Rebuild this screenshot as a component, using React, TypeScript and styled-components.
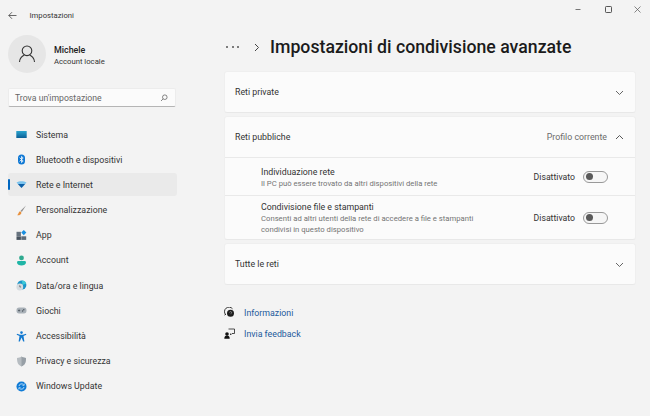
import React from "react";
import styled, { createGlobalStyle } from "styled-components";

const GlobalStyle = createGlobalStyle`
  html, body {
    margin: 0;
    padding: 0;
    background: #f3f3f3;
  }
  body {
    font-family: Roboto, "Noto Sans", sans-serif;
    color: #1f1f1f;
  }
`;

const Window = styled.div`
  width: 650px;
  height: 416px;
  overflow: hidden;
  display: grid;
  grid-template-columns: 224px 1fr;
  grid-template-rows: 30px 1fr;
  background: #f3f3f3;
`;

const TitleBar = styled.header`
  grid-column: 1 / span 2;
  display: flex;
  align-items: center;
  padding: 0 8px 0 8px;
`;

const AppName = styled.span`
  font-size: 7.7px;
  margin-left: 12.5px;
  color: #333;
`;

const Caption = styled.div`
  margin-left: auto;
  align-self: flex-start;
  display: flex;
  align-items: center;
  gap: 20.5px;
  padding-top: 5px;
`;

const Sidebar = styled.nav`
  display: flex;
  flex-direction: column;
  padding: 5px 0 0 8px;
`;

const Profile = styled.div`
  display: flex;
  align-items: center;
  gap: 8px;
  height: 38px;
`;

const Avatar = styled.div`
  width: 38px;
  height: 38px;
  border-radius: 50%;
  background: #e6e6e6;
  display: flex;
  align-items: center;
  justify-content: center;
`;

const ProfileText = styled.div`
  padding-top: 2px;
`;

const UserName = styled.div`
  font-size: 8.9px;
  font-weight: 500;
  line-height: 12px;
  color: #222;
`;

const UserKind = styled.div`
  font-size: 7.7px;
  line-height: 11px;
  color: #333;
`;

const Search = styled.div`
  width: 168px;
  height: 19px;
  margin-top: 15px;
  box-sizing: border-box;
  background: #fbfbfb;
  border: 1px solid #ececec;
  border-bottom: 1px solid #b5b5b5;
  border-radius: 2px;
  display: flex;
  align-items: center;
  justify-content: space-between;
  padding: 1px 7px 0 6px;
  font-size: 8.7px;
  color: #666;
`;

const NavList = styled.div`
  display: flex;
  flex-direction: column;
  gap: 2.2px;
  margin-top: 16px;
  width: 169px;
`;

const NavItem = styled.div<{ $active?: boolean }>`
  position: relative;
  height: 23px;
  display: flex;
  align-items: center;
  gap: 9px;
  padding-left: 8px;
  box-sizing: border-box;
  font-size: 8.8px;
  color: #333;
  border-radius: 3px;
  background: ${(p) => (p.$active ? "#eaeaea" : "transparent")};
  &::before {
    content: "";
    display: ${(p) => (p.$active ? "block" : "none")};
    position: absolute;
    left: 0;
    top: 6px;
    bottom: 6px;
    width: 2px;
    border-radius: 1px;
    background: #0067c0;
  }
`;

const NavIcon = styled.svg`
  width: 11px;
  height: 11px;
  flex: none;
`;

const Main = styled.main`
  display: flex;
  flex-direction: column;
  padding-right: 14px;
`;

const Heading = styled.div`
  display: flex;
  align-items: center;
  height: 34px;
`;

const Dots = styled.span`
  display: flex;
  gap: 3.5px;
  padding-left: 2px;
  margin-right: 14px;
  i {
    width: 2px;
    height: 2px;
    border-radius: 50%;
    background: #555;
  }
`;

const Title = styled.h1`
  margin: 0 0 0 9px;
  font-size: 17.7px;
  font-weight: 500;
  color: #1b1b1b;
  white-space: nowrap;
`;

const Cards = styled.div`
  display: flex;
  flex-direction: column;
  gap: 3px;
  margin-top: 7px;
`;

const Card = styled.section`
  background: #fbfbfb;
  border-radius: 3px;
  border: 1px solid #efefef;
  border-bottom-color: #e8e8e8;
  box-sizing: border-box;
  overflow: hidden;
`;

const CardHead = styled.div`
  height: 40px;
  display: flex;
  align-items: center;
  padding: 0 11px 0 10px;
  font-size: 8.8px;
  color: #333;
`;

const Hint = styled.span`
  margin-left: auto;
  margin-right: 8px;
  color: #6b6b6b;
`;

const Chevron = styled.svg<{ $pushed?: boolean }>`
  width: 9px;
  height: 9px;
  flex: none;
  margin-left: ${(p) => (p.$pushed ? "auto" : "0")};
`;

const Row = styled.div<{ $tall?: boolean }>`
  height: ${(p) => (p.$tall ? "43px" : "37px")};
  border-top: 1px solid #e9e9e9;
  display: flex;
  align-items: center;
  padding: 0 27px 0 36px;
`;

const RowText = styled.div`
  flex: 1;
  min-width: 0;
  padding-top: 1px;
`;

const RowTitle = styled.div`
  font-size: 8.8px;
  line-height: 12px;
  color: #333;
`;

const RowNote = styled.div`
  font-size: 7.7px;
  line-height: 11px;
  color: #747474;
  width: 240px;
`;

const ToggleLabel = styled.span`
  font-size: 8.7px;
  color: #333;
  margin-right: 8px;
`;

const Toggle = styled.span`
  width: 25px;
  height: 12px;
  box-sizing: border-box;
  border: 1px solid #999;
  border-radius: 6px;
  background: #f6f6f6;
  display: flex;
  align-items: center;
  padding-left: 2px;
  &::after {
    content: "";
    width: 7px;
    height: 7px;
    border-radius: 50%;
    background: #5a5a5a;
  }
`;

const Links = styled.div`
  display: flex;
  flex-direction: column;
  gap: 8px;
  margin-top: 21px;
`;

const LinkRow = styled.a`
  display: flex;
  align-items: center;
  gap: 9px;
  height: 13px;
  font-size: 8.8px;
  color: #1d5a9c;
`;

const LinkIcon = styled.svg`
  width: 11px;
  height: 11px;
  flex: none;
`;

const ChevronDown = ({ pushed }: { pushed?: boolean }) => (
  <Chevron viewBox="0 0 9 9" $pushed={pushed}>
    <path d="M1 3l3.5 3.5L8 3" fill="none" stroke="#555" strokeWidth="0.9" />
  </Chevron>
);

const ChevronUp = () => (
  <Chevron viewBox="0 0 9 9">
    <path d="M1 6l3.5-3.5L8 6" fill="none" stroke="#444" strokeWidth="0.9" />
  </Chevron>
);

const navIcons: Record<string, React.ReactNode> = {
  Sistema: (
    <>
      <defs>
        <linearGradient id="sys" x1="0" y1="0" x2="0" y2="1">
          <stop offset="0" stopColor="#2aa5cf" />
          <stop offset="1" stopColor="#0b5f96" />
        </linearGradient>
      </defs>
      <rect x="0.3" y="2" width="10.4" height="7" fill="url(#sys)" />
    </>
  ),
  Bluetooth: (
    <>
      <rect x="2" y="0.5" width="7" height="10" rx="3.5" fill="#0f78d4" />
      <path d="M3.6 3.6l3.6 3.4-1.7 1.6V2.4L7.2 4 3.6 7.4" fill="none" stroke="#fff" strokeWidth="0.8" />
    </>
  ),
  Rete: (
    <>
      <path d="M0.5 3.6C3.4 1.9 7.6 1.9 10.5 3.6L9.2 5H1.800z" fill="#7cc4ee" />
      <path d="M1.800 5h7.400L5.500 9z" fill="#0b5fa8" />
    </>
  ),
  Personalizzazione: (
    <>
      <path d="M10 0.6L4.6 5.800l1.200 1.200z" fill="#8f8f8f" />
      <path d="M4.200 6.200c-1.600 0.400-1.400 2.600-3 4 2.400 0.200 4.300-0.900 4.200-2.800z" fill="#e8903c" />
    </>
  ),
  App: (
    <>
      <rect x="0.5" y="1.8" width="4.4" height="4.200" fill="#66727e" />
      <rect x="0.5" y="6.300" width="4.4" height="3.600" fill="#46525e" />
      <rect x="5.300" y="6.300" width="4.900" height="3.600" fill="#5e6b78" />
      <rect x="6" y="0.8" width="3.600" height="3.600" transform="rotate(45 7.8 2.6)" fill="#1a8fe0" />
    </>
  ),
  Account: (
    <>
      <circle cx="5.5" cy="2.9" r="2.4" fill="#2fa98f" />
      <path d="M1 7.4c0-1 0.8-1.400 1.600-1.400h5.800c0.800 0 1.600 0.400 1.600 1.400 0 2-2.200 3-4.500 3s-4.500-1-4.500-3z" fill="#1fb5a6" />
    </>
  ),
  Data: (
    <>
      <circle cx="5.800" cy="5" r="4.600" fill="#1b95c9" />
      <path d="M5.800 0.400a4.600 4.600 0 0 1 4.400 3.200L6.600 5z" fill="#3dc9d6" />
      <circle cx="3.800" cy="7" r="3.400" fill="#d5dbe0" />
      <path d="M3.800 5.200V7h1.300" fill="none" stroke="#444" strokeWidth="0.6" />
    </>
  ),
  Giochi: (
    <>
      <rect x="0.5" y="2.600" width="10" height="5.800" rx="2.600" fill="#a9b1b8" />
      <path d="M2 5.500h2.200M3.100 4.400v2.200" stroke="#49525a" strokeWidth="0.7" />
      <circle cx="7.800" cy="4.800" r="0.7" fill="#49525a" />
      <circle cx="6.600" cy="6" r="0.7" fill="#49525a" />
    </>
  ),
  "Accessibilità": (
    <>
      <circle cx="5.5" cy="1.600" r="1.300" fill="#1279d0" />
      <path d="M1 2.800l3 1h3l3-1 0.300 1-2.800 1.200 0.900 5.400-1.200 0.200-1.700-4-1.700 4-1.200-0.200 0.900-5.400L0.700 3.800z" fill="#1279d0" />
    </>
  ),
  Privacy: (
    <>
      <path d="M5.500 0.600c1.400 1 3 1.400 4.500 1.500 0 4-0.800 7-4.500 8.500C1.800 9.100 1 6.100 1 2.100c1.500-0.100 3.100-0.500 4.500-1.500z" fill="#b6bcc1" />
      <path d="M5.500 0.600c1.400 1 3 1.400 4.500 1.500 0 4-0.800 7-4.500 8.500z" fill="#979fa6" />
    </>
  ),
  Windows: (
    <>
      <circle cx="5.500" cy="5.500" r="5" fill="#0f7bd6" />
      <path d="M3 5a2.600 2.600 0 0 1 4.600-1.200M8 6a2.600 2.600 0 0 1-4.600 1.200" fill="none" stroke="#d7ecfb" strokeWidth="0.8" />
      <path d="M8.200 2.500v1.800H6.400M2.800 8.500V6.700h1.800" fill="none" stroke="#d7ecfb" strokeWidth="0.7" />
    </>
  ),
};

const navItems = [
  { key: "Sistema", label: "Sistema" },
  { key: "Bluetooth", label: "Bluetooth e dispositivi" },
  { key: "Rete", label: "Rete e Internet", active: true },
  { key: "Personalizzazione", label: "Personalizzazione" },
  { key: "App", label: "App" },
  { key: "Account", label: "Account" },
  { key: "Data", label: "Data/ora e lingua" },
  { key: "Giochi", label: "Giochi" },
  { key: "Accessibilità", label: "Accessibilità" },
  { key: "Privacy", label: "Privacy e sicurezza" },
  { key: "Windows", label: "Windows Update" },
];

export default function App() {
  return (
    <Window>
      <GlobalStyle />
      <TitleBar>
        <svg width="9" height="9" viewBox="0 0 9 9">
          <path d="M8.500 4.500H.8M4 1.200L.8 4.500 4 7.800" fill="none" stroke="#444" strokeWidth="0.8" />
        </svg>
        <AppName>Impostazioni</AppName>
        <Caption>
          <svg width="9" height="9" viewBox="0 0 9 9">
            <path d="M1.500 4.500h5" stroke="#555" strokeWidth="0.8" />
          </svg>
          <svg width="9" height="9" viewBox="0 0 9 9">
            <rect x="1.500" y="1.500" width="6" height="6" rx="0.8" fill="none" stroke="#444" strokeWidth="0.9" />
          </svg>
          <svg width="9" height="9" viewBox="0 0 9 9">
            <path d="M1.500 1.500l6 6M7.500 1.500l-6 6" stroke="#555" strokeWidth="0.7" />
          </svg>
        </Caption>
      </TitleBar>

      <Sidebar>
        <Profile>
          <Avatar>
            <svg width="20" height="20" viewBox="0 0 20 20">
              <circle cx="10" cy="6.800" r="4.800" fill="none" stroke="#333" strokeWidth="1.100" />
              <path d="M2.500 18c0-3.800 3-6.400 4.800-6.800M17.500 18c0-3.800-3-6.400-4.800-6.800" fill="none" stroke="#333" strokeWidth="1.100" />
            </svg>
          </Avatar>
          <ProfileText>
            <UserName>Michele</UserName>
            <UserKind>Account locale</UserKind>
          </ProfileText>
        </Profile>
        <Search>
          <span>Trova un'impostazione</span>
          <svg width="8" height="8" viewBox="0 0 8 8">
            <circle cx="4.800" cy="3.200" r="2.300" fill="none" stroke="#555" strokeWidth="0.7" />
            <path d="M3.100 4.900L1 7" stroke="#555" strokeWidth="0.7" />
          </svg>
        </Search>
        <NavList>
          {navItems.map((item) => (
            <NavItem key={item.key} $active={item.active}>
              <NavIcon viewBox="0 0 11 11">{navIcons[item.key]}</NavIcon>
              {item.label}
            </NavItem>
          ))}
        </NavList>
      </Sidebar>

      <Main>
        <Heading>
          <Dots>
            <i />
            <i />
            <i />
          </Dots>
          <svg width="8" height="9" viewBox="0 0 8 9">
            <path d="M2 1l3.500 3.500L2 8" fill="none" stroke="#444" strokeWidth="1" />
          </svg>
          <Title>Impostazioni di condivisione avanzate</Title>
        </Heading>
        <Cards>
          <Card>
            <CardHead>
              Reti private
              <ChevronDown pushed />
            </CardHead>
          </Card>
          <Card>
            <CardHead>
              Reti pubbliche
              <Hint>Profilo corrente</Hint>
              <ChevronUp />
            </CardHead>
            <Row>
              <RowText>
                <RowTitle>Individuazione rete</RowTitle>
                <RowNote>Il PC può essere trovato da altri dispositivi della rete</RowNote>
              </RowText>
              <ToggleLabel>Disattivato</ToggleLabel>
              <Toggle />
            </Row>
            <Row $tall>
              <RowText>
                <RowTitle>Condivisione file e stampanti</RowTitle>
                <RowNote>
                  Consenti ad altri utenti della rete di accedere a file e stampanti condivisi in questo dispositivo
                </RowNote>
              </RowText>
              <ToggleLabel>Disattivato</ToggleLabel>
              <Toggle />
            </Row>
          </Card>
          <Card>
            <CardHead>
              Tutte le reti
              <ChevronDown pushed />
            </CardHead>
          </Card>
        </Cards>
        <Links>
          <LinkRow>
            <LinkIcon viewBox="0 0 11 11">
              <path d="M1.500 7.500A4.300 4.300 0 0 1 8.500 1.800" fill="none" stroke="#222" strokeWidth="0.9" />
              <path d="M0.500 8l1.500-.8" stroke="#222" strokeWidth="0.9" />
              <circle cx="6.500" cy="6.300" r="3.500" fill="#1c1c1c" />
              <path d="M5.600 5.500a1 1 0 1 1 1.300 1v0.700" fill="none" stroke="#cfcfcf" strokeWidth="0.5" />
            </LinkIcon>
            Informazioni
          </LinkRow>
          <LinkRow>
            <LinkIcon viewBox="0 0 11 11">
              <path d="M4.500 1h6v4.500H8L6.500 7V5.500" fill="none" stroke="#222" strokeWidth="0.8" />
              <circle cx="3" cy="6" r="1.800" fill="#111" />
              <path d="M0.300 10.800c0-2 1-3.200 2.700-3.200s2.700 1.200 2.700 3.200z" fill="#111" />
            </LinkIcon>
            Invia feedback
          </LinkRow>
        </Links>
      </Main>
    </Window>
  );
}
